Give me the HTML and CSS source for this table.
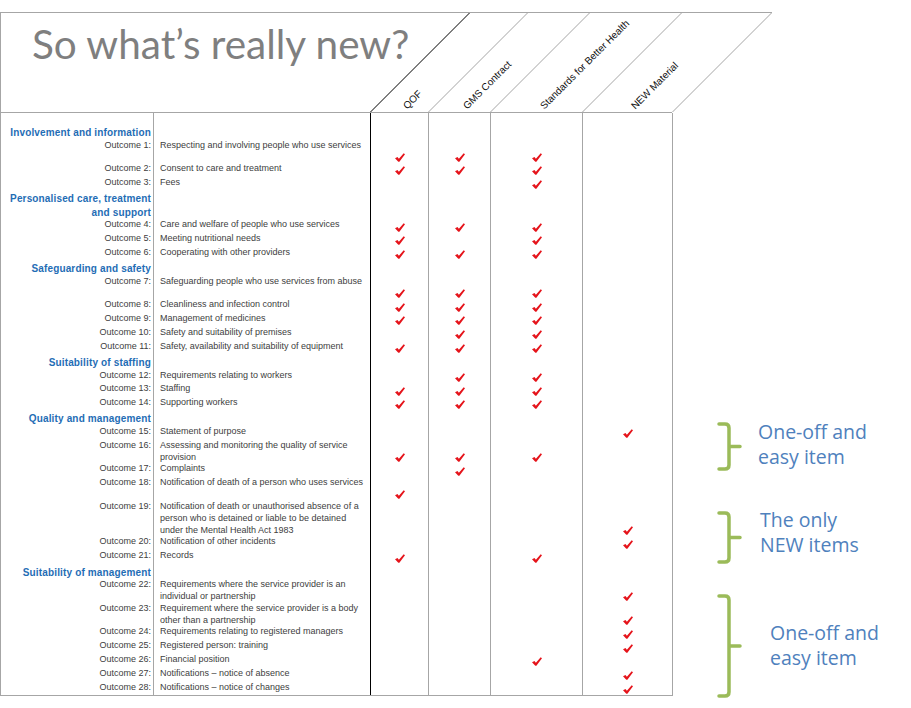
FILE: index.html
```html
<!DOCTYPE html>
<html lang="en">
<head>
<meta charset="utf-8">
<title>So what's really new?</title>
<link rel="stylesheet" href="styles.css">
</head>
<body>
<svg class="defs" width="0" height="0" aria-hidden="true">
  <defs>
    <symbol id="ck" viewBox="0 0 10 9">
      <path d="M0,5.3 L2.5,3.9 L3.9,5.8 L8.7,0.2 L10,1.3 L4.4,8.8 L3.3,8.8 Z" fill="#e5141b"/>
    </symbol>
  </defs>
</svg>
<div class="slide">
  <div class="head">
    <div class="title-cell"><h1>So what’s really new?</h1></div>
    <div class="hcol q"><span>QOF</span></div>
    <div class="hcol g"><span>GMS Contract</span></div>
    <div class="hcol s"><span>Standards for Better Health</span></div>
    <div class="hcol n"><span>NEW Material</span></div>
  </div>

  <div class="rows">
    <div class="row sp"><div class="lab"></div><div class="desc"></div><div class="c q"></div><div class="c g"></div><div class="c s"></div><div class="c n"></div></div>

    <div class="row h"><div class="lab">Involvement and information</div><div class="desc"></div><div class="c q"></div><div class="c g"></div><div class="c s"></div><div class="c n"></div></div>
    <div class="row tall"><div class="lab">Outcome 1:</div><div class="desc">Respecting and involving people who use services</div><div class="c q"><svg class="ck"><use href="#ck"/></svg></div><div class="c g"><svg class="ck"><use href="#ck"/></svg></div><div class="c s"><svg class="ck"><use href="#ck"/></svg></div><div class="c n"></div></div>
    <div class="row"><div class="lab">Outcome 2:</div><div class="desc">Consent to care and treatment</div><div class="c q"><svg class="ck"><use href="#ck"/></svg></div><div class="c g"><svg class="ck"><use href="#ck"/></svg></div><div class="c s"><svg class="ck"><use href="#ck"/></svg></div><div class="c n"></div></div>
    <div class="row"><div class="lab">Outcome 3:</div><div class="desc">Fees</div><div class="c q"></div><div class="c g"></div><div class="c s"><svg class="ck"><use href="#ck"/></svg></div><div class="c n"></div></div>

    <div class="row h"><div class="lab">Personalised care, treatment<br>and support</div><div class="desc"></div><div class="c q"></div><div class="c g"></div><div class="c s"></div><div class="c n"></div></div>
    <div class="row"><div class="lab">Outcome 4:</div><div class="desc">Care and welfare of people who use services</div><div class="c q"><svg class="ck"><use href="#ck"/></svg></div><div class="c g"><svg class="ck"><use href="#ck"/></svg></div><div class="c s"><svg class="ck"><use href="#ck"/></svg></div><div class="c n"></div></div>
    <div class="row"><div class="lab">Outcome 5:</div><div class="desc">Meeting nutritional needs</div><div class="c q"><svg class="ck"><use href="#ck"/></svg></div><div class="c g"></div><div class="c s"><svg class="ck"><use href="#ck"/></svg></div><div class="c n"></div></div>
    <div class="row"><div class="lab">Outcome 6:</div><div class="desc">Cooperating with other providers</div><div class="c q"><svg class="ck"><use href="#ck"/></svg></div><div class="c g"><svg class="ck"><use href="#ck"/></svg></div><div class="c s"><svg class="ck"><use href="#ck"/></svg></div><div class="c n"></div></div>

    <div class="row h"><div class="lab">Safeguarding and safety</div><div class="desc"></div><div class="c q"></div><div class="c g"></div><div class="c s"></div><div class="c n"></div></div>
    <div class="row tall"><div class="lab">Outcome 7:</div><div class="desc">Safeguarding people who use services from abuse</div><div class="c q"><svg class="ck"><use href="#ck"/></svg></div><div class="c g"><svg class="ck"><use href="#ck"/></svg></div><div class="c s"><svg class="ck"><use href="#ck"/></svg></div><div class="c n"></div></div>
    <div class="row"><div class="lab">Outcome 8:</div><div class="desc">Cleanliness and infection control</div><div class="c q"><svg class="ck"><use href="#ck"/></svg></div><div class="c g"><svg class="ck"><use href="#ck"/></svg></div><div class="c s"><svg class="ck"><use href="#ck"/></svg></div><div class="c n"></div></div>
    <div class="row"><div class="lab">Outcome 9:</div><div class="desc">Management of medicines</div><div class="c q"><svg class="ck"><use href="#ck"/></svg></div><div class="c g"><svg class="ck"><use href="#ck"/></svg></div><div class="c s"><svg class="ck"><use href="#ck"/></svg></div><div class="c n"></div></div>
    <div class="row"><div class="lab">Outcome 10:</div><div class="desc">Safety and suitability of premises</div><div class="c q"></div><div class="c g"><svg class="ck"><use href="#ck"/></svg></div><div class="c s"><svg class="ck"><use href="#ck"/></svg></div><div class="c n"></div></div>
    <div class="row"><div class="lab">Outcome 11:</div><div class="desc">Safety, availability and suitability of equipment</div><div class="c q"><svg class="ck"><use href="#ck"/></svg></div><div class="c g"><svg class="ck"><use href="#ck"/></svg></div><div class="c s"><svg class="ck"><use href="#ck"/></svg></div><div class="c n"></div></div>

    <div class="row h"><div class="lab">Suitability of staffing</div><div class="desc"></div><div class="c q"></div><div class="c g"></div><div class="c s"></div><div class="c n"></div></div>
    <div class="row"><div class="lab">Outcome 12:</div><div class="desc">Requirements relating to workers</div><div class="c q"></div><div class="c g"><svg class="ck"><use href="#ck"/></svg></div><div class="c s"><svg class="ck"><use href="#ck"/></svg></div><div class="c n"></div></div>
    <div class="row"><div class="lab">Outcome 13:</div><div class="desc">Staffing</div><div class="c q"><svg class="ck"><use href="#ck"/></svg></div><div class="c g"><svg class="ck"><use href="#ck"/></svg></div><div class="c s"><svg class="ck"><use href="#ck"/></svg></div><div class="c n"></div></div>
    <div class="row"><div class="lab">Outcome 14:</div><div class="desc">Supporting workers</div><div class="c q"><svg class="ck"><use href="#ck"/></svg></div><div class="c g"><svg class="ck"><use href="#ck"/></svg></div><div class="c s"><svg class="ck"><use href="#ck"/></svg></div><div class="c n"></div></div>

    <div class="row h"><div class="lab">Quality and management</div><div class="desc"></div><div class="c q"></div><div class="c g"></div><div class="c s"></div><div class="c n"></div></div>
    <div class="row"><div class="lab">Outcome 15:</div><div class="desc">Statement of purpose</div><div class="c q"></div><div class="c g"></div><div class="c s"></div><div class="c n"><svg class="ck"><use href="#ck"/></svg></div></div>
    <div class="row"><div class="lab">Outcome 16:</div><div class="desc">Assessing and monitoring the quality of service<br>provision</div><div class="c q"><svg class="ck"><use href="#ck"/></svg></div><div class="c g"><svg class="ck"><use href="#ck"/></svg></div><div class="c s"><svg class="ck"><use href="#ck"/></svg></div><div class="c n"></div></div>
    <div class="row"><div class="lab">Outcome 17:</div><div class="desc">Complaints</div><div class="c q"></div><div class="c g"><svg class="ck"><use href="#ck"/></svg></div><div class="c s"></div><div class="c n"></div></div>
    <div class="row tall"><div class="lab">Outcome 18:</div><div class="desc">Notification of death of a person who uses services</div><div class="c q"><svg class="ck"><use href="#ck"/></svg></div><div class="c g"></div><div class="c s"></div><div class="c n"></div></div>
    <div class="row"><div class="lab">Outcome 19:</div><div class="desc">Notification of death or unauthorised absence of a<br>person who is detained or liable to be detained<br>under the Mental Health Act 1983</div><div class="c q"></div><div class="c g"></div><div class="c s"></div><div class="c n"><svg class="ck"><use href="#ck"/></svg></div></div>
    <div class="row"><div class="lab">Outcome 20:</div><div class="desc">Notification of other incidents</div><div class="c q"></div><div class="c g"></div><div class="c s"></div><div class="c n"><svg class="ck"><use href="#ck"/></svg></div></div>
    <div class="row"><div class="lab">Outcome 21:</div><div class="desc">Records</div><div class="c q"><svg class="ck"><use href="#ck"/></svg></div><div class="c g"></div><div class="c s"><svg class="ck"><use href="#ck"/></svg></div><div class="c n"></div></div>

    <div class="row h"><div class="lab">Suitability of management</div><div class="desc"></div><div class="c q"></div><div class="c g"></div><div class="c s"></div><div class="c n"></div></div>
    <div class="row"><div class="lab">Outcome 22:</div><div class="desc">Requirements where the service provider is an<br>individual or partnership</div><div class="c q"></div><div class="c g"></div><div class="c s"></div><div class="c n"><svg class="ck"><use href="#ck"/></svg></div></div>
    <div class="row"><div class="lab">Outcome 23:</div><div class="desc">Requirement where the service provider is a body<br>other than a partnership</div><div class="c q"></div><div class="c g"></div><div class="c s"></div><div class="c n"><svg class="ck"><use href="#ck"/></svg></div></div>
    <div class="row"><div class="lab">Outcome 24:</div><div class="desc">Requirements relating to registered managers</div><div class="c q"></div><div class="c g"></div><div class="c s"></div><div class="c n"><svg class="ck"><use href="#ck"/></svg></div></div>
    <div class="row"><div class="lab">Outcome 25:</div><div class="desc">Registered person: training</div><div class="c q"></div><div class="c g"></div><div class="c s"></div><div class="c n"><svg class="ck"><use href="#ck"/></svg></div></div>
    <div class="row"><div class="lab">Outcome 26:</div><div class="desc">Financial position</div><div class="c q"></div><div class="c g"></div><div class="c s"><svg class="ck"><use href="#ck"/></svg></div><div class="c n"></div></div>
    <div class="row"><div class="lab">Outcome 27:</div><div class="desc">Notifications – notice of absence</div><div class="c q"></div><div class="c g"></div><div class="c s"></div><div class="c n"><svg class="ck"><use href="#ck"/></svg></div></div>
    <div class="row"><div class="lab">Outcome 28:</div><div class="desc">Notifications – notice of changes</div><div class="c q"></div><div class="c g"></div><div class="c s"></div><div class="c n"><svg class="ck"><use href="#ck"/></svg></div></div>
  </div>

  <div class="note n1">
    <svg class="brace" width="28" height="49" viewBox="0 0 28 49"><path d="M3,2 H9 Q13,2 13,6 V43 Q13,47 9,47 H3 M13,24.5 H24"/></svg>
    <p>One-off and<br>easy item</p>
  </div>
  <div class="note n2">
    <svg class="brace" width="28" height="53" viewBox="0 0 28 53"><path d="M3,2 H9 Q13,2 13,6 V47 Q13,51 9,51 H3 M13,26.5 H24"/></svg>
    <p>The only<br>NEW items</p>
  </div>
  <div class="note n3">
    <svg class="brace" width="28" height="104" viewBox="0 0 28 104"><path d="M3,2 H9 Q13,2 13,6 V98 Q13,102 9,102 H3 M13,52 H24"/></svg>
    <p>One-off and<br>easy item</p>
  </div>
</div>
</body>
</html>
```

FILE: styles.css
```css
* { box-sizing: border-box; }

body {
  margin: 0;
  background: #ffffff;
  font-family: "Liberation Sans", Arial, sans-serif;
}

.defs {
  position: absolute;
  width: 0;
  height: 0;
  overflow: hidden;
}

.slide {
  position: relative;
  width: 911px;
  height: 708px;
  padding-top: 12px;
  overflow: hidden;
}

/* ---------- header ---------- */
.head {
  display: flex;
  width: 772px;
  height: 101px;
  border-top: 1px solid #a6a6a6;
}

.title-cell {
  flex: none;
  width: 370px;
  border-left: 1px solid #a6a6a6;
  border-bottom: 1px solid #a6a6a6;
}

.title-cell h1 {
  margin: 0;
  padding: 10px 0 0 31px;
  font: 400 40.5px/42px Lato, "Open Sans", sans-serif;
  color: #7f7f7f;
  white-space: nowrap;
}

.hcol {
  position: relative;
  flex: none;
  display: flex;
  align-items: flex-end;
  padding-bottom: 1px;
  border-bottom: 1px solid #a6a6a6;
}

.hcol::before,
.hcol.n::after {
  content: "";
  position: absolute;
  left: 0;
  top: 0;
  bottom: 0;
  width: 0;
  border-left: 1px solid #a6a6a6;
  transform: skewX(-45deg);
  transform-origin: 0 100%;
}

.hcol.n::after { left: 100%; }

.hcol.q::before { border-left-color: #000000; }

.hcol.q { width: 58px; }
.hcol.g { width: 62px; }
.hcol.s { width: 92px; }
.hcol.n { width: 90px; }

.hcol span {
  flex: none;
  margin-left: calc(50% + 10px);
  font-size: 10px;
  line-height: 11.5px;
  color: #111111;
  white-space: nowrap;
  transform-origin: 0 100%;
  transform: rotate(-45deg);
}

/* ---------- table ---------- */
.rows {
  width: 673px;
  border-bottom: 1px solid #a6a6a6;
}

.row {
  display: grid;
  grid-template-columns: 153px 217px 58px 62px 92px 91px;
}

.row > div { border-left: 1px solid #a6a6a6; }
.row > .c.q { border-left: 1px solid #000000; }
.row > .c.n { border-right: 1px solid #a6a6a6; }

.row.sp { height: 11.5px; }

.lab {
  padding-right: 2px;
  text-align: right;
  font-size: 9px;
  line-height: 11.85px;
  color: #404040;
  white-space: nowrap;
}

.desc {
  padding-left: 6px;
  min-height: 13.8px;
  font-size: 9px;
  line-height: 11.85px;
  color: #404040;
  white-space: nowrap;
}

.row.tall .desc { min-height: 23.7px; }

.row.h .lab {
  padding-top: 1.5px;
  font-size: 10px;
  font-weight: bold;
  line-height: 13.5px;
  letter-spacing: 0.15px;
  color: #1f6db5;
}

.row.h .desc { min-height: 0; }

.c {
  display: flex;
  align-items: flex-end;
  justify-content: center;
  padding-bottom: 1.5px;
}

.ck {
  display: block;
  width: 10px;
  height: 9px;
}

/* ---------- annotations ---------- */
.note {
  position: absolute;
  left: 716px;
  display: flex;
  align-items: flex-start;
}

.brace {
  flex: none;
  display: block;
}

.brace path {
  fill: none;
  stroke: #9bbb59;
  stroke-width: 3.5;
  stroke-linecap: round;
  stroke-linejoin: round;
}

.note p {
  margin: 0;
  font: 400 19.5px/25px "Open Sans", sans-serif;
  color: #4f81bd;
  white-space: nowrap;
}

.n1 { top: 422px; }
.n1 p { margin: -3px 0 0 14px; }

.n2 { top: 511px; }
.n2 p { margin: -4px 0 0 16px; }

.n3 { top: 594px; }
.n3 p { margin: 26px 0 0 26px; }
```
